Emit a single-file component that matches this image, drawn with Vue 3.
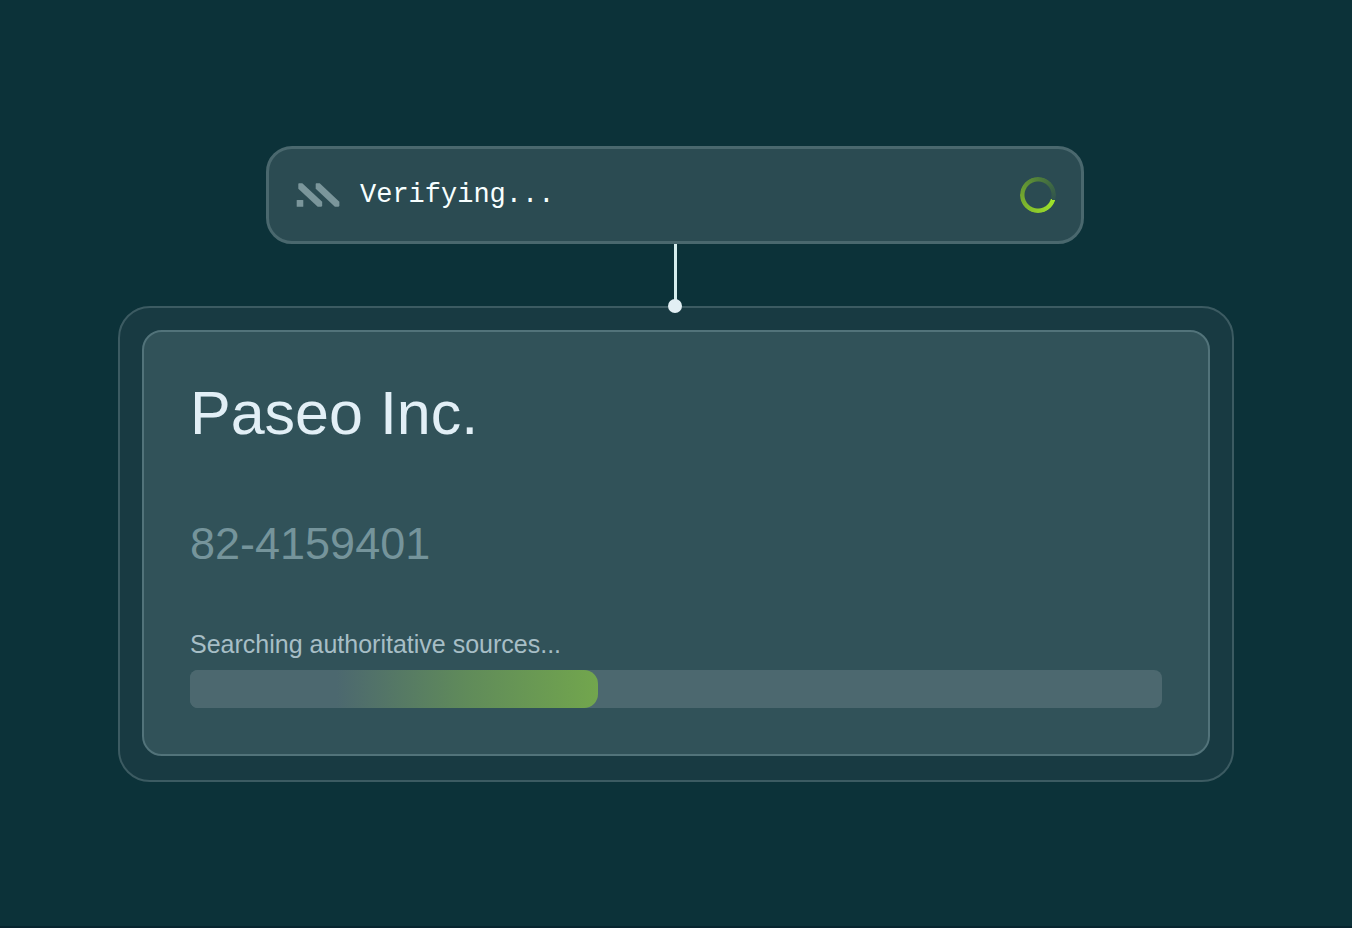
<script setup>
const company = { name: 'Paseo Inc.', taxId: '82-4159401' }
const progress = 42
</script>

<template>
  <main class="page">
    <section class="status" role="status">
      <svg class="logo" viewBox="0 0 44 26" aria-hidden="true">
        <rect x="0.7" y="18" width="6.6" height="6.8" rx="0.6" />
        <path d="M3 1.3H6.3L26.2 19.8V23.2Q26.2 24.7 24.7 24.7H21.7L2.3 6.7V2Q2.3 1.3 3 1.3Z" />
        <path d="M20.4 1.3H23.7L43.4 19.8V23.2Q43.4 24.7 41.9 24.7H38.9L19.7 6.7V2Q19.7 1.3 20.4 1.3Z" />
      </svg>
      <span class="status-text">Verifying...</span>
      <span class="spinner" aria-hidden="true"></span>
    </section>

    <div class="connector" aria-hidden="true"></div>

    <section class="frame">
      <div class="card">
        <h1 class="name">{{ company.name }}</h1>
        <p class="tax-id">{{ company.taxId }}</p>
        <p id="search-label" class="search-label">Searching authoritative sources...</p>
        <div
          class="track"
          role="progressbar"
          aria-labelledby="search-label"
          aria-valuemin="0"
          aria-valuemax="100"
          :aria-valuenow="progress"
        >
          <div class="fill" :style="{ width: progress + '%' }"></div>
        </div>
      </div>
    </section>
  </main>
</template>

<style>
body {
  margin: 0;
  background: #0c3239;
}
</style>

<style scoped>
.page {
  box-sizing: border-box;
  min-height: 100vh;
  padding: 24px 118px;
  display: flex;
  flex-direction: column;
  justify-content: center;
  background: #0c3239;
  border-bottom: 2px solid #07252f;
  border-top: 2px solid #0c3239;
  font-family: "Liberation Sans", Arial, sans-serif;
}

.status,
.connector {
  margin: 0 150px 0 148px;
}

.status {
  box-sizing: border-box;
  padding: 27px 25px 27px 27px;
  display: flex;
  align-items: center;
  background: #2b4b52;
  border: 3px solid #4a686e;
  border-radius: 26px;
}

.logo {
  width: 44px;
  height: 26px;
  fill: #7b969b;
}

.status-text {
  flex: 1;
  margin-left: 20px;
  font-family: "Liberation Mono", "Courier New", monospace;
  font-size: 27px;
  line-height: 38px;
  color: #f7ffff;
}

.spinner {
  width: 36px;
  height: 36px;
  border-radius: 50%;
  background: conic-gradient(
    from 108deg,
    #a0e42a 0deg,
    #8cc92b 80deg,
    #70a52f 162deg,
    #4d7b3b 260deg,
    #3a6246 320deg,
    #30524f 360deg
  );
  -webkit-mask: radial-gradient(circle, transparent 13px, #000 14px);
  mask: radial-gradient(circle, transparent 13px, #000 14px);
}

.connector {
  position: relative;
  z-index: 1;
  align-self: center;
  width: 3px;
  height: 62px;
  background: #d5eded;
}

.connector::after {
  content: "";
  position: absolute;
  bottom: -7px;
  left: 50%;
  width: 14px;
  height: 14px;
  border-radius: 50%;
  background: #e2eff4;
  transform: translateX(-50%);
}

.frame {
  padding: 22px 22px 24px;
  background: #183a42;
  border: 2px solid #3c5b62;
  border-radius: 32px;
}

.card {
  padding: 46px;
  background: #315259;
  border: 2px solid #52737a;
  border-radius: 20px;
}

.name {
  margin: 0;
  font-size: 61px;
  line-height: 70px;
  font-weight: 400;
  color: #e2eff6;
}

.tax-id {
  margin: 70px 0 0;
  font-size: 45px;
  line-height: 52px;
  color: #75949b;
}

.search-label {
  margin: 60px 0 12px;
  font-size: 25px;
  line-height: 28px;
  color: #a7bec6;
}

.track {
  height: 38px;
  overflow: hidden;
  background: #4c686f;
  border-radius: 8px;
}

.fill {
  height: 100%;
  border-radius: 0 14px 14px 0;
  background: linear-gradient(to right, #4c686f 36%, #608b5a 68%, #72a64d 100%);
}
</style>
